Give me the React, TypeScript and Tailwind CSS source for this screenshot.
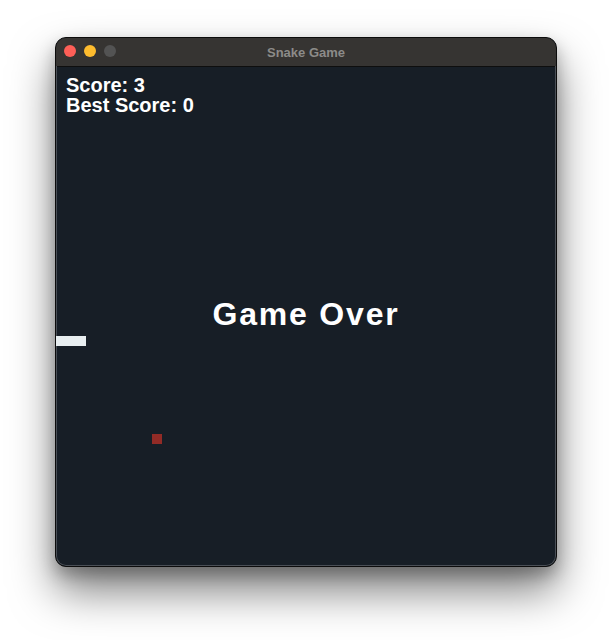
import React from 'react';

const font = { fontFamily: '"Liberation Sans", Arial, sans-serif' };

export default function App() {
  return (
    <div className="w-[612px] h-[640px] bg-white overflow-hidden" style={font}>
      <div className="ml-[55px] mt-[37px] w-[502px] h-[530px] rounded-[11px] border border-[#0c0c0c] bg-[#171e26] overflow-hidden flex flex-col shadow-[0_24px_44px_rgba(0,0,0,0.5),0_8px_16px_rgba(0,0,0,0.25)]">
        {/* title bar */}
        <div className="relative h-[29px] shrink-0 bg-[#363432] border-b border-[#0e0e0e] flex items-center justify-center">
          <div className="absolute left-[8px] top-[7px] flex gap-[8px]">
            <span className="w-[12px] h-[12px] rounded-full bg-[#fe5f57]" />
            <span className="w-[12px] h-[12px] rounded-full bg-[#febc2e]" />
            <span className="w-[12px] h-[12px] rounded-full bg-[#535353]" />
          </div>
          <span className="text-[13px] font-bold text-[#8c8b89] leading-none">Snake Game</span>
        </div>

        {/* game canvas */}
        <div className="relative flex-1 border-x border-b border-[#4a4f56] rounded-b-[10px] -mt-px">
          <div className="pt-[9px] px-[9px] text-white text-[20px] font-bold leading-[20px]">
            <div>Score: 3</div>
            <div>Best Score: 0</div>
          </div>

          <div className="absolute left-0 right-0 top-[232px] text-center text-white text-[32px] font-bold leading-[32px] tracking-[1.8px]">
            Game Over
          </div>

          <div className="absolute left-[-1px] top-[270px] w-[30px] h-[10px] bg-[#e8eef0]" />
          <div className="absolute left-[95px] top-[368px] w-[10px] h-[10px] bg-[#922b26]" />
        </div>
      </div>
    </div>
  );
}
